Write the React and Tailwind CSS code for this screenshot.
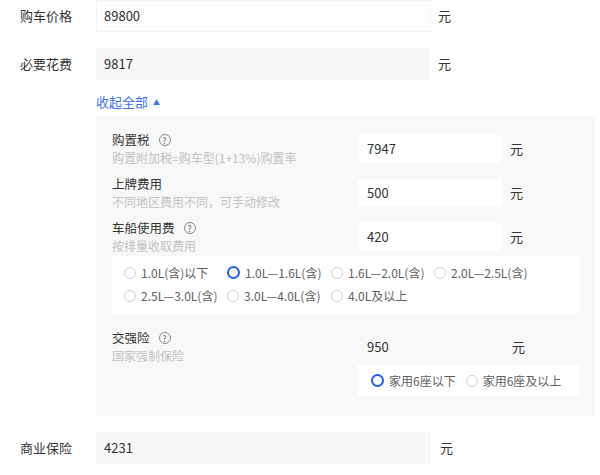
import React from "react";

const font = { fontFamily: '"Noto Sans CJK SC", "Noto Sans", sans-serif' };

function Q() {
  return (
    <span className="ml-[9px] inline-flex h-[12px] w-[12px] items-center justify-center rounded-full border border-[#888] text-[8.5px] leading-none text-[#666]">
      ?
    </span>
  );
}

function Radio({ checked, label, w }) {
  return (
    <div className={`flex items-center ${w || ""}`}>
      {checked ? (
        <span className="box-border h-[13px] w-[13px] shrink-0 rounded-full border-[2px] border-[#1f5ef0] bg-white" />
      ) : (
        <span className="box-border h-[12px] w-[12px] shrink-0 rounded-full border border-[#cfcfcf] bg-white" />
      )}
      <span className="ml-[5px] whitespace-nowrap text-[12px] text-[#5f5f5f]">{label}</span>
    </div>
  );
}

function SubRow({ title, sub, q, value }) {
  return (
    <div className="flex h-[28px] items-center">
      <div className="w-[246px] shrink-0">
        <div className="flex items-center text-[12.5px] leading-[18px] text-[#333]">
          {title}
          {q && <Q />}
        </div>
        <div className="text-[12px] leading-[18px] text-[#c2c2c2]">{sub}</div>
      </div>
      <div className="flex h-[28px] w-[144px] items-center rounded-[2px] bg-white pl-[9px] text-[13px] text-[#333]">
        {value}
      </div>
      <span className="ml-[8px] text-[13px] text-[#333]">元</span>
    </div>
  );
}

export default function App() {
  return (
    <div style={font} className="h-[475px] w-[600px] overflow-hidden bg-white">
      <div className="flex h-[32px] items-center">
        <div className="w-[96px] pl-[20px] text-[13px] text-[#333]">购车价格</div>
        <div className="flex h-[32px] w-[335px] items-center border border-[#f3f3f3] bg-[#fdfdfd] pl-[7px] text-[13px] text-[#333]">
          89800
        </div>
        <span className="ml-[7px] text-[13px] text-[#333]">元</span>
      </div>
      <div className="mt-[16px] flex h-[32px] items-center">
        <div className="w-[96px] pl-[20px] text-[13px] text-[#333]">必要花费</div>
        <div className="flex h-[32px] w-[333px] items-center bg-[#f7f7f7] pl-[8px] text-[13px] text-[#333]">
          9817
        </div>
        <span className="ml-[9px] text-[13px] text-[#333]">元</span>
      </div>
      <div className="ml-[96px] mt-[12px] flex h-[20px] items-center text-[13px] text-[#3d6ff0]">
        收起全部
        <span className="ml-[5px] text-[7px]">▲</span>
      </div>
      <div className="ml-[96px] mt-[4px] w-[499px] bg-[#f8f8f8] pb-[20px] pl-[16px] pr-[15px] pt-[19px]">
        <div className="flex flex-col gap-[16px]">
          <SubRow title="购置税" q sub="购置附加税=购车型(1+13%)购置率" value="7947" />
          <SubRow title="上牌费用" sub="不同地区费用不同，可手动修改" value="500" />
          <SubRow title="车船使用费" q sub="按排量收取费用" value="420" />
        </div>
        <div className="mt-[5px] h-[57px] w-[468px] bg-white pl-[12px] pt-[5px]">
          <div className="flex h-[23px] items-center">
            <Radio label="1.0L(含)以下" w="w-[103px]" />
            <Radio checked label="1.0L—1.6L(含)" w="w-[104px]" />
            <Radio label="1.6L—2.0L(含)" w="w-[103px]" />
            <Radio label="2.0L—2.5L(含)" w="w-[103px]" />
          </div>
          <div className="flex h-[23px] items-center">
            <Radio label="2.5L—3.0L(含)" w="w-[103px]" />
            <Radio label="3.0L—4.0L(含)" w="w-[104px]" />
            <Radio label="4.0L及以上" w="w-[103px]" />
          </div>
        </div>
        <div className="mt-[20px] flex h-[28px] items-center">
          <div className="w-[246px] shrink-0">
            <div className="flex items-center text-[12.5px] leading-[18px] text-[#333]">
              交强险
              <Q />
            </div>
            <div className="text-[12px] leading-[18px] text-[#c2c2c2]">国家强制保险</div>
          </div>
          <div className="flex h-[28px] w-[146px] items-center pl-[9px] text-[13px] text-[#333]">950</div>
          <span className="ml-[8px] text-[13px] text-[#333]">元</span>
        </div>
        <div className="ml-[246px] mt-[4px] flex h-[31px] w-[221px] items-center bg-white pl-[13px]">
          <Radio checked label="家用6座以下" />
          <div className="ml-[10px]">
            <Radio label="家用6座及以上" />
          </div>
        </div>
      </div>
      <div className="mt-[16px] flex h-[32px] items-center">
        <div className="w-[96px] pl-[20px] text-[13px] text-[#333]">商业保险</div>
        <div className="flex h-[32px] w-[335px] items-center bg-[#f7f7f7] pl-[8px] text-[13px] text-[#333]">
          4231
        </div>
        <span className="ml-[9px] text-[13px] text-[#333]">元</span>
      </div>
    </div>
  );
}
